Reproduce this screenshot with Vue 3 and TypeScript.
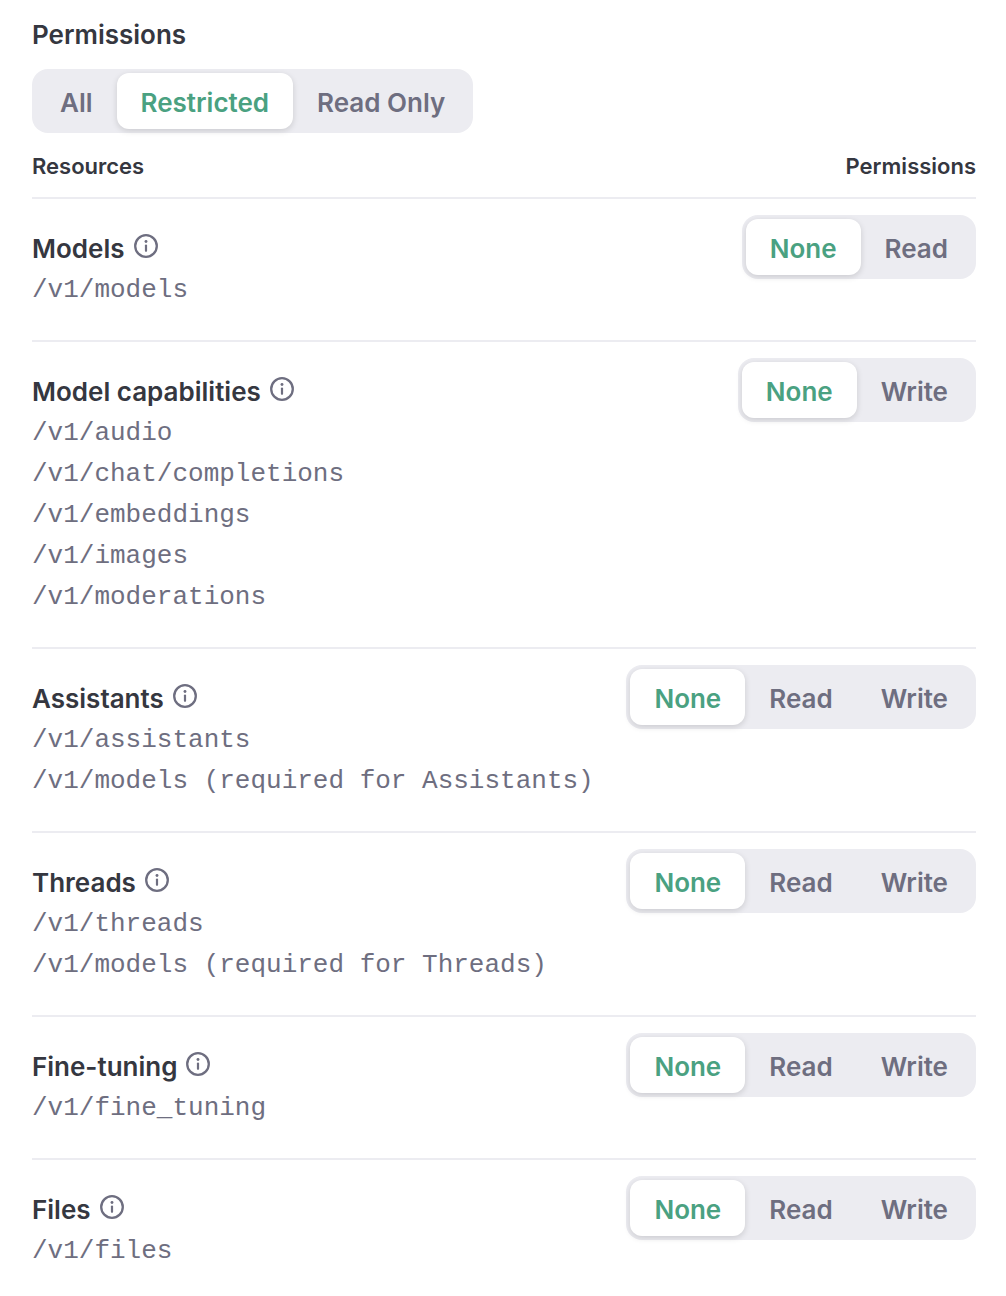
<script setup lang="ts">
import { ref, reactive } from 'vue'

type Level = 'None' | 'Read' | 'Write'

interface Resource {
  name: string
  paths: string[]
  levels: Level[]
}

const modes = ['All', 'Restricted', 'Read Only']
const mode = ref('Restricted')

const resources: Resource[] = [
  { name: 'Models', paths: ['/v1/models'], levels: ['None', 'Read'] },
  {
    name: 'Model capabilities',
    paths: ['/v1/audio', '/v1/chat/completions', '/v1/embeddings', '/v1/images', '/v1/moderations'],
    levels: ['None', 'Write'],
  },
  {
    name: 'Assistants',
    paths: ['/v1/assistants', '/v1/models (required for Assistants)'],
    levels: ['None', 'Read', 'Write'],
  },
  {
    name: 'Threads',
    paths: ['/v1/threads', '/v1/models (required for Threads)'],
    levels: ['None', 'Read', 'Write'],
  },
  { name: 'Fine-tuning', paths: ['/v1/fine_tuning'], levels: ['None', 'Read', 'Write'] },
  { name: 'Files', paths: ['/v1/files'], levels: ['None', 'Read', 'Write'] },
]

const selected = reactive<Record<string, Level>>(
  Object.fromEntries(resources.map((r) => [r.name, 'None' as Level])),
)
</script>

<template>
  <main class="permissions">
    <h1 id="mode-label" class="heading">Permissions</h1>
    <div class="segmented" role="group" aria-labelledby="mode-label">
      <button
        v-for="m in modes"
        :key="m"
        type="button"
        class="segment"
        :class="{ active: mode === m }"
        :aria-pressed="mode === m"
        @click="mode = m"
      >{{ m }}</button>
    </div>

    <table class="resources">
      <thead>
        <tr>
          <th scope="col">Resources</th>
          <th scope="col" class="end">Permissions</th>
        </tr>
      </thead>
      <tbody>
        <tr v-for="r in resources" :key="r.name">
          <td class="info">
            <div class="title">
              <span>{{ r.name }}</span>
              <svg class="icon" viewBox="0 0 24 24" fill="none" aria-hidden="true">
                <circle cx="12" cy="12" r="10.8" stroke="currentColor" stroke-width="2.3" />
                <circle cx="12" cy="7.5" r="1.45" fill="currentColor" />
                <path d="M12 11.6v5.2" stroke="currentColor" stroke-width="2.2" stroke-linecap="round" />
              </svg>
            </div>
            <div v-for="p in r.paths" :key="p" class="path">{{ p }}</div>
          </td>
          <td class="end">
            <div class="segmented" role="group" :aria-label="r.name">
              <button
                v-for="l in r.levels"
                :key="l"
                type="button"
                class="segment"
                :class="{ active: selected[r.name] === l }"
                :aria-pressed="selected[r.name] === l"
                @click="selected[r.name] = l"
              >{{ l }}</button>
            </div>
          </td>
        </tr>
      </tbody>
    </table>
  </main>
</template>

<style>
body {
  margin: 0;
  background: #fff;
}
</style>

<style scoped>
.permissions {
  padding: 16px 30px 16px 32px;
  color: #353740;
  font-family: Inter, 'Liberation Sans', sans-serif;
  font-size: 26px;
  font-weight: 600;
}

.heading {
  margin: 0 0 16px;
  font-size: 26px;
  font-weight: 600;
  line-height: 37px;
}

.segmented {
  display: inline-flex;
  padding: 4px;
  border-radius: 16px;
  background: #ececf1;
  vertical-align: top;
}

.segment {
  height: 56px;
  padding: 3px 24px 0;
  border: 0;
  border-radius: 12px;
  background: transparent;
  color: #6e6e80;
  font: inherit;
  line-height: 53px;
  white-space: nowrap;
  cursor: pointer;
}

.segment.active {
  background: #fff;
  box-shadow: 0 2px 6px rgba(0, 0, 0, 0.14);
  color: #4aa181;
}

.resources {
  width: 100%;
  border-collapse: separate;
  border-spacing: 0;
}

th {
  padding: 17px 0 15px;
  border-bottom: 2px solid #ececf1;
  font-size: 22px;
  font-weight: 600;
  line-height: 32px;
  text-align: left;
}

td {
  padding: 16px 0;
  border-bottom: 2px solid #ececf1;
  vertical-align: top;
}

tbody tr:last-child td {
  border-bottom: 0;
}

.info {
  padding: 29px 0;
}

.end {
  text-align: right;
}

.title {
  display: flex;
  align-items: center;
  gap: 9px;
  line-height: 42px;
}

.icon {
  width: 24px;
  height: 24px;
  margin-bottom: 6px;
  color: #6e6e80;
}

.path {
  color: #6e6e80;
  font-family: 'Liberation Mono', monospace;
  font-size: 26px;
  font-weight: 400;
  line-height: 41px;
}
</style>
